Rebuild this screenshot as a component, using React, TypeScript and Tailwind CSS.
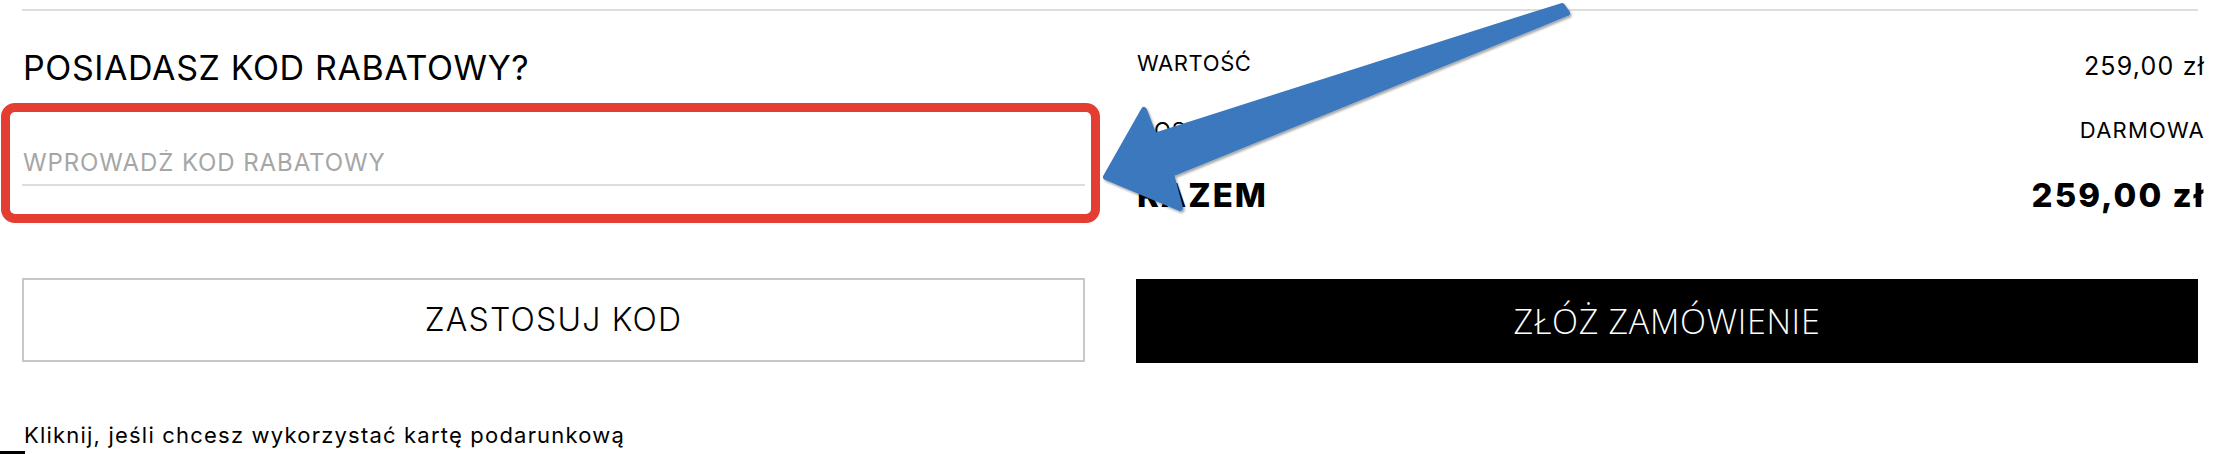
import React from "react";

export default function App() {
  return (
    <div className="relative w-[2236px] h-[454px] overflow-hidden bg-white font-['Inter','Noto_Sans',sans-serif] text-black">
      <div className="w-[2198px] pl-[22px] pt-[9px]">
        <div className="h-[2px] bg-[#dddddd]" />
        <div className="grid grid-cols-[1063px_1062px] grid-rows-[267px_84px] gap-x-[51px]">
          {/* left top */}
          <div className="flex flex-col">
            <h2 className="mt-[40px] text-[34px] leading-none font-normal tracking-[0.6px] pl-[1px]">
              POSIADASZ KOD RABATOWY?
            </h2>
            <div className="relative mt-[65px]">
              <div className="pointer-events-none absolute -left-[21px] -right-[15px] -top-[47px] -bottom-[37px] rounded-[14px] border-[9px] border-[#e43d32]" />
              <input
                type="text"
                placeholder="WPROWADŹ KOD RABATOWY"
                className="block h-[36px] w-full border-0 border-b-2 border-[#dddddd] bg-transparent p-0 pb-[10px] pl-[1px] text-[24px] leading-none tracking-[0.9px] text-black outline-none placeholder:text-[#a6a6a6]"
              />
            </div>
          </div>
          {/* right top */}
          <div className="flex flex-col -mr-[7px] pl-[1px]">
            <div className="mt-[41px] flex items-start justify-between">
              <span className="text-[22px] leading-none tracking-[0.6px]">WARTOŚĆ</span>
              <span className="mt-[2px] text-[25px] leading-none tracking-[1.2px]">259,00 zł</span>
            </div>
            <div className="mt-[40px] flex items-start justify-between">
              <span className="text-[22px] leading-none tracking-[1px]">DOSTAWA</span>
              <span className="text-[22px] leading-none tracking-[1.2px]">DARMOWA</span>
            </div>
            <div className="mt-[38px] flex items-start justify-between">
              <span className="text-[33px] leading-none font-extrabold tracking-[2px]">RAZEM</span>
              <span className="text-[33px] leading-none font-extrabold tracking-[2px]">259,00 zł</span>
            </div>
          </div>
          {/* buttons */}
          <button className="flex h-[84px] items-center justify-center border-2 border-[#c8c8c8] bg-white text-[32px] font-light leading-none tracking-[1.2px]">
            ZASTOSUJ KOD
          </button>
          <button className="mt-[1px] flex h-[84px] items-center justify-center bg-black font-['Open_Sans',sans-serif] text-[34px] font-light leading-none tracking-[0.7px] text-white">
            ZŁÓŻ ZAMÓWIENIE
          </button>
        </div>
        <p className="mt-[62px] pl-[2px] text-[22px] leading-none tracking-[1.2px]">
          Kliknij, jeśli chcesz wykorzystać kartę podarunkową
        </p>
        <div className="-ml-[22px] mt-[5px] h-[3px] w-[25px] bg-black" />
      </div>

      <svg
        className="pointer-events-none absolute left-0 top-0"
        width="2236"
        height="454"
        viewBox="0 0 2236 454"
      >
        <defs>
          <filter id="sh" x="-10%" y="-10%" width="120%" height="130%">
            <feDropShadow dx="1.5" dy="2" stdDeviation="1" floodColor="#000" floodOpacity="0.35" />
          </filter>
        </defs>
        <polygon
          filter="url(#sh)"
          points="1106,177 1144,110 1154,136 1562,6 1567,13 1171,174 1180,208"
          fill="#3a78be"
          stroke="#3a78be"
          strokeWidth="6"
          strokeLinejoin="round"
        />
      </svg>
    </div>
  );
}
